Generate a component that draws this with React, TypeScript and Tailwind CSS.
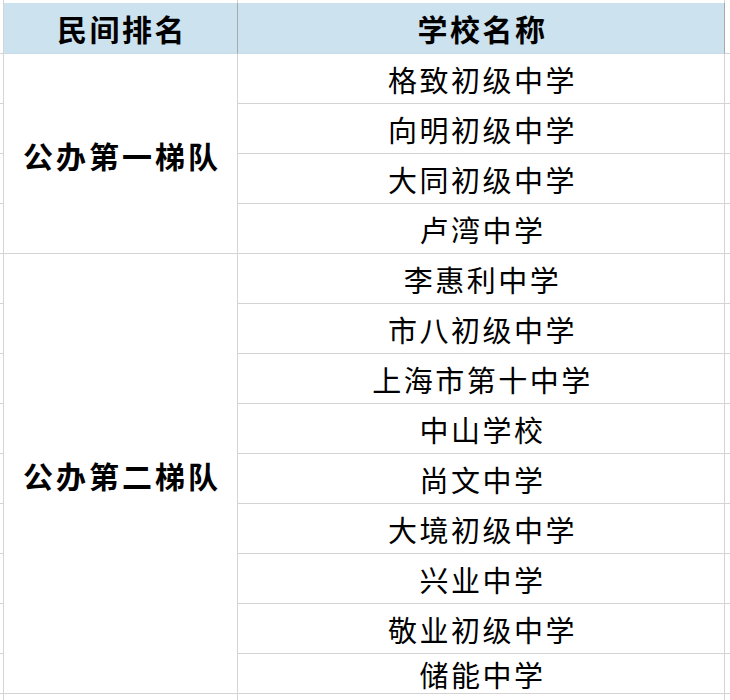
const groups = [
  {
    name: "公办第一梯队",
    span: "row-span-4",
    schools: ["格致初级中学", "向明初级中学", "大同初级中学", "卢湾中学"],
  },
  {
    name: "公办第二梯队",
    span: "row-span-9",
    schools: [
      "李惠利中学",
      "市八初级中学",
      "上海市第十中学",
      "中山学校",
      "尚文中学",
      "大境初级中学",
      "兴业中学",
      "敬业初级中学",
      "储能中学",
    ],
  },
];

const font = { fontFamily: '"Noto Sans CJK SC", "Noto Sans", sans-serif' };

// grid line cell on the sheet outside the table
function Edge({ last }: { last?: boolean }) {
  return <div className={last ? "border-b border-[#d4d4d4]" : "border-b border-r border-[#d4d4d4]"} />;
}

export default function App() {
  const rows = groups.flatMap((g) => g.schools.map((s, i) => ({ group: g, school: s, first: i === 0 })));

  return (
    <div className="h-[700px] w-[730px] overflow-hidden bg-white text-black" style={font}>
      <div className="grid grid-cols-[4px_234px_487px_1fr] grid-rows-[3px_51px_repeat(12,50px)_40px_50px]">
        {/* top strip */}
        <div className="border-r border-[#d4d4d4]" />
        <div className="border-r border-[#d4d4d4]" />
        <div className="border-r border-[#d4d4d4]" />
        <div />

        {/* header */}
        <div className="border-b border-r border-[#d4d4d4]" />
        <div className="flex items-center justify-center border-b border-r border-b-[#c9dbe6] border-r-[#a9a9a9] bg-[#cde2ef] pl-[3px] pt-[1px] text-[30px] font-bold tracking-[2.5px]">
          民间排名
        </div>
        <div className="flex items-center justify-center border-b border-r border-b-[#c9dbe6] border-r-[#a9a9a9] bg-[#cde2ef] pl-[3px] pt-[1px] text-[30px] font-bold tracking-[2.5px]">
          学校名称
        </div>
        <Edge last />

        {rows.map(({ group, school, first }, i) => (
          <div key={school} className="contents">
            <Edge />
            {first && (
              <div
                className={`${group.span} ${i === 0 ? "row-start-3" : "row-start-7"} col-start-2 flex items-center justify-center border-b border-r border-[#d4d4d4] pl-[3px] pt-[4px] text-[30px] font-bold tracking-[3px]`}
              >
                {group.name}
              </div>
            )}
            <div className="col-start-3 flex items-center justify-center border-b border-r border-[#d4d4d4] pl-[3px] pt-[3px] text-[29px] tracking-[2.5px]">
              {school}
            </div>
            <Edge last />
          </div>
        ))}

        {/* next sheet row, partly visible */}
        <div className="border-r border-[#d4d4d4]" />
        <div className="border-r border-[#d4d4d4]" />
        <div className="border-r border-[#d4d4d4]" />
        <div />
      </div>
    </div>
  );
}
